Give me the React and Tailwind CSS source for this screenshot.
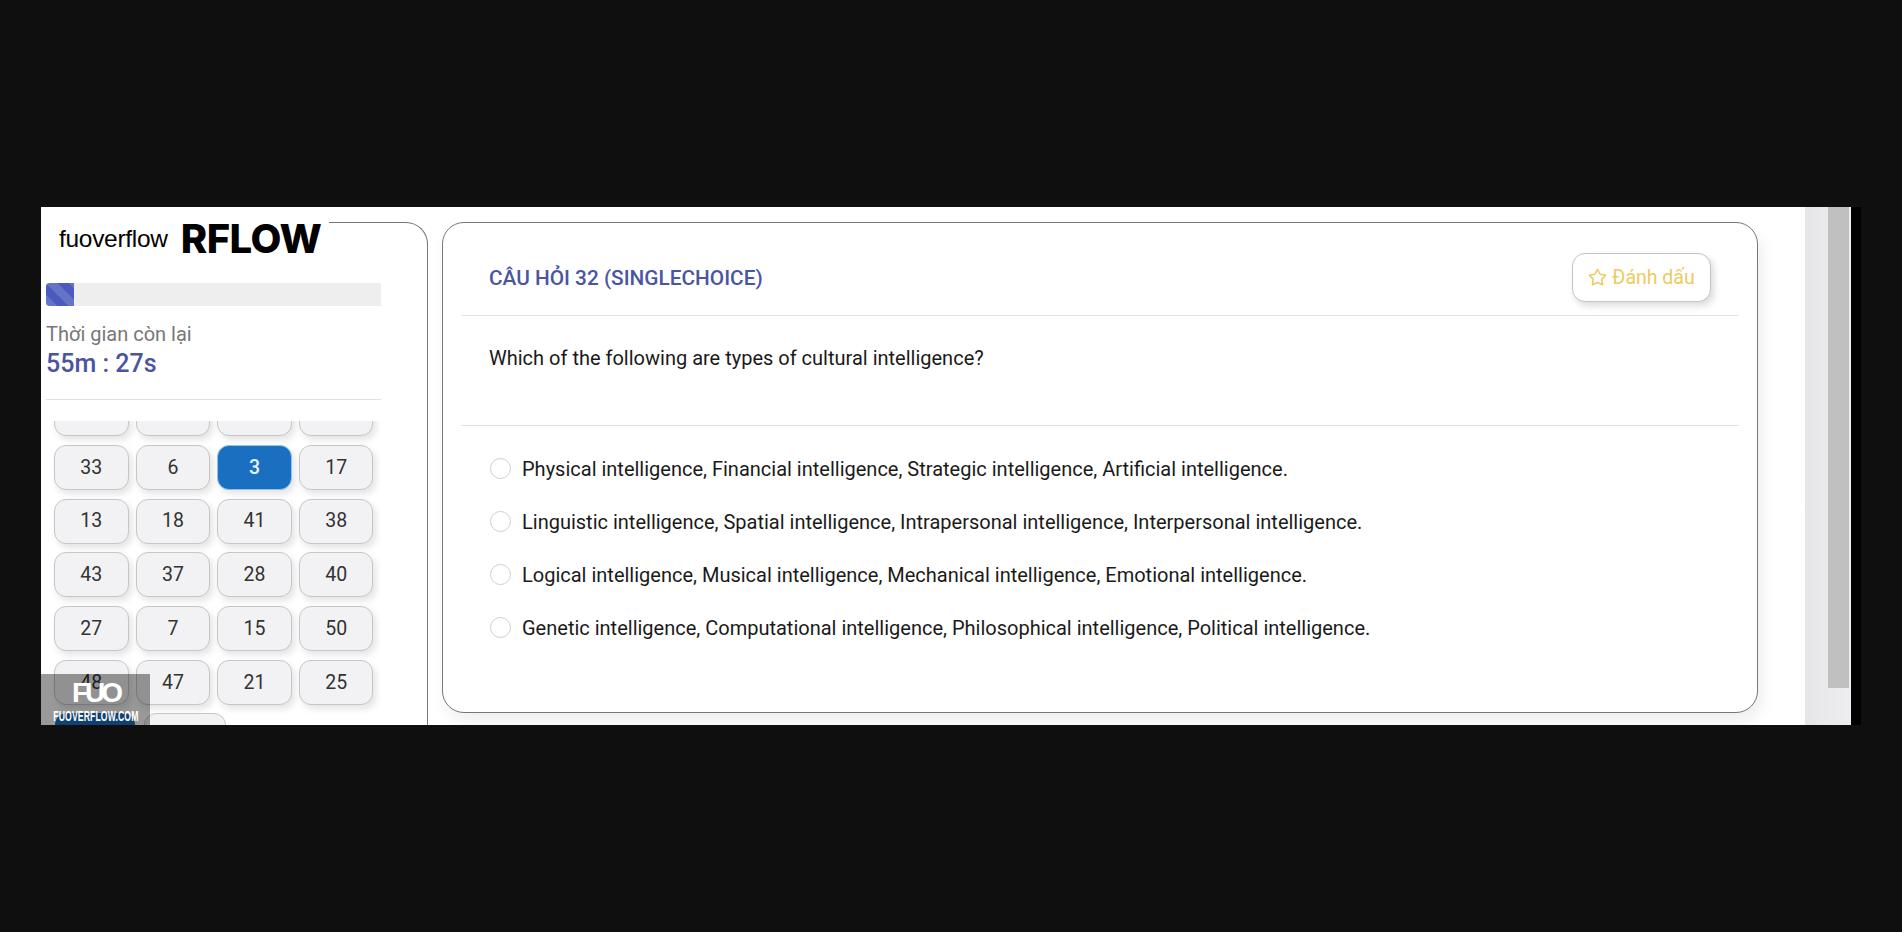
import { Star } from 'lucide-react';

const rows = [
  ['', '', '', ''],
  ['33', '6', '3', '17'],
  ['13', '18', '41', '38'],
  ['43', '37', '28', '40'],
  ['27', '7', '15', '50'],
  ['48', '47', '21', '25'],
];

const options = [
  'Physical intelligence, Financial intelligence, Strategic intelligence, Artificial intelligence.',
  'Linguistic intelligence, Spatial intelligence, Intrapersonal intelligence, Interpersonal intelligence.',
  'Logical intelligence, Musical intelligence, Mechanical intelligence, Emotional intelligence.',
  'Genetic intelligence, Computational intelligence, Philosophical intelligence, Political intelligence.',
];

function NumberButton({ label }) {
  const active = label === '3';
  return (
    <button
      className={`h-[45px] rounded-[12px] border text-[19.5px] shadow-[3px_4px_7px_rgba(0,0,0,0.11)] ${
        active
          ? 'border-[#8fc2ee] bg-[#1a6fc0] font-medium text-[#e4f3ff]'
          : 'border-[#c6c6c8] bg-[#f2f2f4] text-[#333333]'
      }`}
    >
      {label}
    </button>
  );
}

function Sidebar() {
  return (
    <div className="relative flex h-[530px] w-[387px] shrink-0 flex-col rounded-tr-[22px] border-t border-r border-[#777777] pl-[5px] pr-[45px]">
      <div className="absolute -top-[12px] left-0 flex h-[56px] w-[288px] items-center bg-white pl-[18px]">
        <span className="text-[24.5px] font-['Liberation_Sans'] tracking-[-0.3px] text-black">fuoverflow</span>
        <span className="ml-[13px] text-[40px] font-extrabold font-['Inter'] tracking-[-0.5px] text-black">RFLOW</span>
      </div>
      <div className="mt-[60px] h-[23px] w-[335px] bg-[#eeeeee]">
        <div className="h-full w-[28px] rounded-l-[4px] bg-[#4a5abd] bg-[linear-gradient(45deg,rgba(255,255,255,0.15)_25%,transparent_25%,transparent_50%,rgba(255,255,255,0.15)_50%,rgba(255,255,255,0.15)_75%,transparent_75%,transparent)] bg-size-[23px_23px]" />
      </div>
      <p className="mt-[14px] text-[20px] leading-[28px] text-[#777777]">Thời gian còn lại</p>
      <p className="text-[25px] leading-[32px] font-medium text-[#4a55a2]">55m : 27s</p>
      <div className="mt-[19px] h-px w-[335px] bg-[#e0e0e0]" />
      <div className="mt-[21px] min-h-0 flex-1 overflow-hidden">
        <div className="-mt-[30px] grid grid-cols-[repeat(4,74.5px)] gap-x-[7.17px] gap-y-[8.75px] pl-[8px]">
          {rows.flat().map((label, i) => (
            <NumberButton key={i} label={label} />
          ))}
        </div>
        <div className="mt-[8px] flex gap-[9px] pl-[9px]">
          <div className="h-[45px] w-[80px] rounded-[12px] bg-[#1a6fc0]" />
          <div className="h-[45px] w-[82px] rounded-[12px] border border-[#c6c6c8] bg-[#f2f2f4]" />
        </div>
      </div>
    </div>
  );
}

function Watermark() {
  return (
    <div className="absolute bottom-0 left-0 flex h-[51px] w-[109px] flex-col items-center overflow-hidden bg-black/40 text-white">
      <span className="text-[28px] leading-[37px] font-bold font-['Liberation_Sans'] tracking-[-4px]">FUO</span>
      <span className="-mt-[3px] scale-x-[0.576] text-[15px] leading-[15px] font-bold whitespace-nowrap font-['Liberation_Sans'] tracking-[0.2px]">FUOVERFLOW.COM</span>
    </div>
  );
}

function QuestionCard() {
  return (
    <div className="ml-[14px] flex h-[491px] w-[1316px] shrink-0 flex-col rounded-[22px] border border-[#777777] bg-white px-[18px] shadow-[4px_8px_16px_rgba(0,0,0,0.07)]">
      <div className="flex h-[93px] shrink-0 items-center justify-between border-b border-[#e2e2e2] px-[28px] pt-[20px]">
        <h2 className="text-[20.8px] font-medium text-[#4a55a2]">CÂU HỎI 32 (SINGLECHOICE)</h2>
        <button className="mb-[3px] flex h-[49px] w-[139px] items-center justify-center gap-[5px] rounded-[13px] border border-[#c4c4c4] bg-white text-[19.5px] text-[#ebcb62] shadow-[3px_4px_7px_rgba(0,0,0,0.14)]">
          <Star className="h-[19px] w-[19px]" strokeWidth={2} />
          Đánh dấu
        </button>
      </div>
      <div className="h-[110px] shrink-0 border-b border-[#e2e2e2] pt-[28px] pl-[28px]">
        <p className="text-[20px] leading-[28px] text-[#1a1a1a]">Which of the following are types of cultural intelligence?</p>
      </div>
      <div className="flex flex-col gap-[30px] pt-[31px] pl-[29px]">
        {options.map((text) => (
          <label key={text} className="flex h-[23px] items-center gap-[11px]">
            <span className="h-[21px] w-[21px] shrink-0 rounded-full border border-[#cfcfcf] bg-white" />
            <span className="text-[20px] text-[#1a1a1a]">{text}</span>
          </label>
        ))}
      </div>
    </div>
  );
}

export default function App() {
  return (
    <div className="h-[932px] w-full overflow-hidden bg-[#0f0f0f] pt-[207px] pl-[41px] font-['Roboto',sans-serif]">
      <div className="flex h-[518px] w-[1820px]">
        <div className="relative flex w-[1810px] overflow-hidden bg-white pt-[15px]">
          <Sidebar />
          <QuestionCard />
          <div className="ml-auto flex h-[518px] w-[46px] -translate-y-[15px] bg-[linear-gradient(90deg,#e6e6e8,#eeeef0)]">
            <div className="ml-[23px] h-[481px] w-[21px] bg-[#c0c0c0]" />
          </div>
          <Watermark />
        </div>
        <div className="w-[10px] bg-black" />
      </div>
    </div>
  );
}
